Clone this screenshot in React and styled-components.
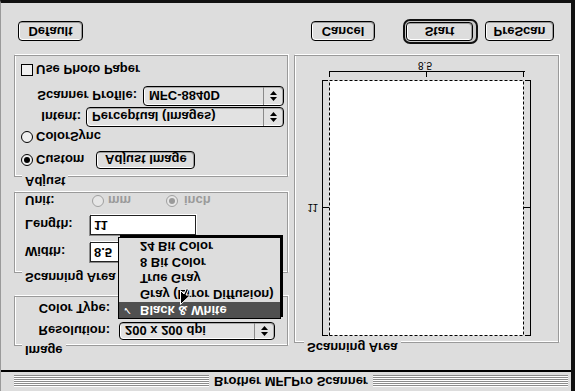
import React from 'react'
import styled, { createGlobalStyle } from 'styled-components'

const GlobalStyle = createGlobalStyle`
  html, body {
    margin: 0;
    padding: 0;
    background: #ffffff;
  }
  body {
    font-family: "Liberation Sans", Arial, sans-serif;
    font-size: 13px;
    font-weight: bold;
    color: #000;
  }
`

// the whole screenshot is a vertically mirrored dialog, so we build it upright and flip it
const Window = styled.div`
  width: 575px;
  height: 391px;
  box-sizing: border-box;
  background: #dddddd;
  border-left: 1px solid #9a9a9a;
  border-right: 4px solid #111;
  border-bottom: 3px solid #111;
  display: flex;
  flex-direction: column;
  transform: scaleY(-1);
  overflow: hidden;
`

const TitleBar = styled.div`
  height: 19px;
  flex: none;
  border-bottom: 2px solid #000;
  display: flex;
  align-items: center;
  padding: 0 3px 0 13px;
`

const Stripes = styled.div`
  flex: 1;
  height: 12px;
  background: repeating-linear-gradient(to bottom, #ffffff 0 1px, #8c8c8c 1px 2px);
`

const Title = styled.div`
  padding: 0 5px;
  line-height: 19px;
  white-space: nowrap;
`

const Content = styled.div`
  flex: 1;
  padding: 24px 0 0 13px;
`

const Columns = styled.div`
  display: flex;
  gap: 6px;
`

const LeftColumn = styled.div`
  width: 274px;
  display: flex;
  flex-direction: column;
`

const Group = styled.div`
  position: relative;
  box-sizing: border-box;
  width: ${p => p.$w}px;
  height: ${p => p.$h}px;
  margin-top: ${p => p.$mt || 0}px;
  padding: ${p => p.$pad || '0'};
  border: 1px solid #9a9a9a;
  box-shadow: inset 1px 1px 0 #ffffff, 1px 1px 0 #ffffff;
  display: flex;
  flex-direction: column;
`

const Legend = styled.span`
  position: absolute;
  top: -12px;
  left: ${p => p.$left || 7}px;
  padding: 0 3px;
  line-height: 13px;
  background: #dddddd;
  white-space: nowrap;
`

const Row = styled.div`
  display: flex;
  align-items: center;
  height: ${p => p.$h || 20}px;
  margin-top: ${p => p.$mt || 0}px;
  justify-content: ${p => (p.$end ? 'flex-end' : 'flex-start')};
  gap: ${p => p.$gap || 0}px;
  padding-left: ${p => p.$pl || 0}px;
  padding-right: ${p => p.$pr || 0}px;
  position: relative;
  white-space: nowrap;
`

const Label = styled.span`
  width: ${p => (p.$w ? `${p.$w}px` : 'auto')};
  flex: none;
  text-align: ${p => (p.$right ? 'right' : 'left')};
  color: ${p => (p.$disabled ? '#9a9a9a' : '#000')};
`

const Popup = styled.div`
  box-sizing: border-box;
  width: ${p => p.$w}px;
  height: ${p => p.$h || 20}px;
  flex: none;
  border: 1px solid #000;
  border-radius: 4px;
  background: #e2e2e2;
  box-shadow: inset 1px 1px 0 #ffffff, inset -1px -1px 0 #a8a8a8;
  display: flex;
  align-items: center;
  position: relative;
`

const PopupText = styled.span`
  flex: 1;
  padding-left: 5px;
  overflow: hidden;
`

const PopupArrows = styled.span`
  width: 19px;
  align-self: stretch;
  border-left: 1px solid #8a8a8a;
  display: flex;
  align-items: center;
  justify-content: center;
`

const TextField = styled.div`
  box-sizing: border-box;
  width: ${p => p.$w}px;
  height: 20px;
  flex: none;
  background: #ffffff;
  border: 1px solid #222;
  box-shadow: -1px -1px 0 #8a8a8a, 1px 1px 0 #ffffff;
  padding-left: 3px;
  line-height: 18px;
`

const Radio = styled.span`
  box-sizing: border-box;
  width: 12px;
  height: 12px;
  flex: none;
  border-radius: 50%;
  border: 1px solid ${p => (p.$disabled ? '#a0a0a0' : '#000')};
  background: ${p => (p.$disabled ? '#e6e6e6' : '#efefef')};
  display: inline-flex;
  align-items: center;
  justify-content: center;
  margin-right: ${p => p.$mr || 3}px;
  margin-left: ${p => p.$ml || 0}px;

  &::after {
    content: '';
    display: ${p => (p.$on ? 'block' : 'none')};
    width: 6px;
    height: 6px;
    border-radius: 50%;
    background: ${p => (p.$disabled ? '#9a9a9a' : '#000')};
  }
`

const Checkbox = styled.span`
  box-sizing: border-box;
  width: 12px;
  height: 12px;
  flex: none;
  border: 1px solid #000;
  background: #efefef;
  margin-right: 3px;
`

const Button = styled.div`
  box-sizing: border-box;
  width: ${p => p.$w}px;
  height: ${p => p.$h || 20}px;
  flex: none;
  border: 1px solid #000;
  border-radius: 4px;
  background: #dddddd;
  box-shadow: inset 1px 1px 0 #ffffff, inset -1px -1px 0 #9a9a9a;
  display: flex;
  align-items: center;
  justify-content: center;
  margin-left: ${p => p.$ml || 0}px;
  margin-right: ${p => p.$mr || 0}px;
`

const DefaultRing = styled.div`
  box-sizing: border-box;
  width: ${p => p.$w}px;
  height: 25px;
  border: 2px solid #111;
  border-radius: 7px;
  padding: 1px;
  background: #c8c8c8;
  display: flex;
  margin-right: ${p => p.$mr || 0}px;
`

const ButtonRow = styled.div`
  display: flex;
  align-items: center;
  height: 25px;
  margin-top: 11px;
  padding-left: 4px;
`

const Spacer = styled.div`
  flex: 1;
`

const Menu = styled.div`
  position: absolute;
  top: -1px;
  left: 8px;
  z-index: 10;
  box-sizing: border-box;
  width: 163px;
  border: 1px solid #000;
  background: #dddddd;
  box-shadow: 2px 2px 0 #000;
`

const MenuItem = styled.div`
  height: 16px;
  line-height: 16px;
  display: flex;
  background: ${p => (p.$active ? '#505050' : 'transparent')};
  color: ${p => (p.$active ? '#ffffff' : '#000')};
`

const Check = styled.span`
  width: 21px;
  flex: none;
  padding-left: 4px;
  box-sizing: border-box;
  font-family: "DejaVu Sans", sans-serif;
  font-size: 11px;
`

const Cursor = styled.svg`
  position: absolute;
  left: 61px;
  top: 13px;
`

const PreviewSvg = styled.svg`
  display: block;
`

function Arrows() {
  return (
    <svg width="7" height="10" viewBox="0 0 7 10">
      <path d="M3.5 0 L7 4 L0 4 Z M0 6 L7 6 L3.5 10 Z" fill="#000" />
    </svg>
  )
}

function PopupMenu({ w, h, text }) {
  return (
    <Popup $w={w} $h={h}>
      <PopupText>{text}</PopupText>
      <PopupArrows>
        <Arrows />
      </PopupArrows>
    </Popup>
  )
}

const colorTypes = ['Black & White', 'Gray (Error Diffusion)', 'True Gray', '8 Bit Color', '24 Bit Color']

function Preview() {
  const dash = '3 2'
  return (
    <PreviewSvg width="263" height="286" viewBox="0 0 263 286">
      <rect x="34.5" y="6.5" width="194" height="255" fill="#fff" stroke="#000" strokeDasharray={dash} />
      <g stroke="#000" fill="none">
        <path d="M27.5 6 V262 M27 6.5 H33 M27 261.5 H33 M27 134.5 H34" />
        <path d="M235.5 6 V262 M230 6.5 H236 M230 261.5 H236 M229 134.5 H236" />
        <path d="M34 270.5 H230 M34.5 265 V271 M228.5 265 V271 M131.5 265 V271" />
      </g>
      <text x="130" y="280" textAnchor="middle" fontSize="10" fontWeight="normal" fontFamily="Liberation Sans, Arial, sans-serif">8.5</text>
      <text x="23" y="138" textAnchor="end" fontSize="10" fontWeight="normal" fontFamily="Liberation Sans, Arial, sans-serif">11</text>
    </PreviewSvg>
  )
}

export default function App() {
  return (
    <>
      <GlobalStyle />
      <Window>
        <TitleBar>
          <Stripes />
          <Title>Brother MFLPro Scanner</Title>
          <Stripes />
        </TitleBar>
        <Content>
          <Columns>
            <LeftColumn>
              <Group $w={274} $h={50} $pad="5px 0 0 0">
                <Legend>Image</Legend>
                <Row $h={18}>
                  <Label $w={95} $right>Resolution:</Label>
                  <Row $h={18} $pl={9}>
                    <PopupMenu w={156} h={18} text="200 x 200 dpi" />
                  </Row>
                </Row>
                <Row $h={18} $mt={4}>
                  <Label $w={95} $right>Color Type:</Label>
                  <Row $h={18} $pl={9}>
                    {/* the open menu covers this popup, so its text is not drawn */}
                    <PopupMenu w={156} h={18} text="" />
                    <Menu>
                      {colorTypes.map((c, i) => (
                        <MenuItem key={c} $active={i === 0}>
                          <Check>{i === 0 ? '✓' : ''}</Check>
                          <span>{c}</span>
                        </MenuItem>
                      ))}
                      <Cursor width="12" height="18" viewBox="0 0 12 18">
                        <path d="M0.5 0.5 L0.5 14.5 L4 11 L6.5 16.5 L8.5 15.5 L6 10 L10.5 10 Z" fill="#000" stroke="#fff" strokeWidth="1" />
                      </Cursor>
                    </Menu>
                  </Row>
                </Row>
              </Group>

              <Group $w={274} $h={81} $mt={23} $pad="10px 0 0 10px">
                <Legend>Scanning Area</Legend>
                <Row>
                  <Label $w={65}>Width:</Label>
                  <TextField $w={106}>8.5</TextField>
                </Row>
                <Row $mt={7}>
                  <Label $w={65}>Length:</Label>
                  <TextField $w={106}>11</TextField>
                </Row>
                <Row $h={16} $mt={6}>
                  <Label $w={65}>Unit:</Label>
                  <Radio $disabled $ml={2} $mr={4} />
                  <Label $disabled $w={58}>mm</Label>
                  <Radio $disabled $on $mr={6} />
                  <Label $disabled>inch</Label>
                </Row>
              </Group>

              <Group $w={274} $h={122} $mt={15} $pad="7px 3px 0 6px">
                <Legend>Adjust</Legend>
                <Row $h={18}>
                  <Radio $on />
                  <Label>Custom</Label>
                  <Button $w={99} $h={18} $ml={12}>Adjust Image</Button>
                </Row>
                <Row $h={18} $mt={5}>
                  <Radio />
                  <Label>ColorSync</Label>
                </Row>
                <Row $mt={1} $end $gap={5}>
                  <Label>Intent:</Label>
                  <PopupMenu w={198} text="Perceptual (Images)" />
                </Row>
                <Row $mt={1} $end $gap={6}>
                  <Label>Scanner Profile:</Label>
                  <PopupMenu w={141} text="MFC-8840D" />
                </Row>
                <Row $h={18} $mt={7}>
                  <Checkbox />
                  <Label>Use Photo Paper</Label>
                </Row>
              </Group>
            </LeftColumn>

            <Group $w={265} $h={288} $mt={3}>
              <Legend $left={9}>Scanning Area</Legend>
              <Preview />
            </Group>
          </Columns>

          <ButtonRow>
            <Button $w={65}>Default</Button>
            <Spacer />
            <Button $w={64} $mr={28}>Cancel</Button>
            <DefaultRing $w={75} $mr={7}>
              <Button $w={67} $h={19}>Start</Button>
            </DefaultRing>
            <Button $w={69} $mr={17}>PreScan</Button>
          </ButtonRow>
        </Content>
      </Window>
    </>
  )
}
